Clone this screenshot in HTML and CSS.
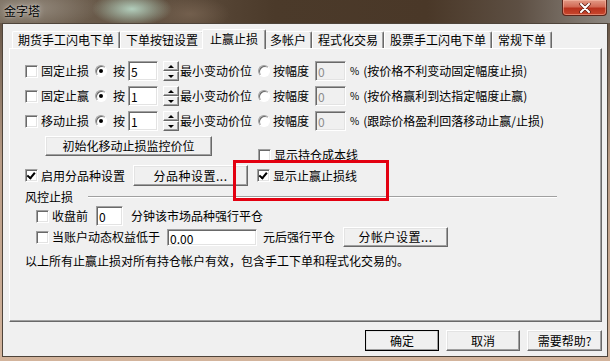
FILE: index.html
```html
<!DOCTYPE html>
<html>
<head>
    <meta charset="utf-8">
    <link rel="stylesheet" href="styles.css">
</head>
<body>
    <div class="window">
        <div class="titlebar">
            <span class="title">金字塔</span>
            <span class="close">
                <svg width="14" height="10" viewBox="0 0 14 10">
                    <path d="M3 1 L11 9 M11 1 L3 9" stroke="#5a1a10" stroke-width="3.4" stroke-linecap="round"/>
                    <path d="M3 1 L11 9 M11 1 L3 9" stroke="#fff" stroke-width="2" stroke-linecap="round"/>
                </svg>
            </span>
        </div>

        <div class="client">
            <div class="tab-strip">
                <div class="tab">期货手工闪电下单</div>
                <div class="tab">下单按钮设置</div>
                <div class="tab active">止赢止损</div>
                <div class="tab">多帐户</div>
                <div class="tab">程式化交易</div>
                <div class="tab">股票手工闪电下单</div>
                <div class="tab">常规下单</div>
            </div>

            <div class="panel">
                <div class="row">
                    <span class="check"></span>
                    <span class="label">固定止损</span>
                    <span class="radio on"></span>
                    <span>按</span>
                    <span class="input num">5</span>
                    <span class="spin"><span class="up"></span><span class="down"></span></span>
                    <span class="unit">最小变动价位</span>
                    <span class="radio second"></span>
                    <span>按幅度</span>
                    <span class="input pct disabled">0</span>
                    <span class="percent">%</span>
                    <span class="hint">(按价格不利变动固定幅度止损)</span>
                </div>
                <div class="row">
                    <span class="check"></span>
                    <span class="label">固定止赢</span>
                    <span class="radio on"></span>
                    <span>按</span>
                    <span class="input num">1</span>
                    <span class="spin"><span class="up"></span><span class="down"></span></span>
                    <span class="unit">最小变动价位</span>
                    <span class="radio second"></span>
                    <span>按幅度</span>
                    <span class="input pct disabled">0</span>
                    <span class="percent">%</span>
                    <span class="hint">(按价格赢利到达指定幅度止赢)</span>
                </div>
                <div class="row">
                    <span class="check"></span>
                    <span class="label">移动止损</span>
                    <span class="radio on"></span>
                    <span>按</span>
                    <span class="input num">1</span>
                    <span class="spin"><span class="up"></span><span class="down"></span></span>
                    <span class="unit">最小变动价位</span>
                    <span class="radio second"></span>
                    <span>按幅度</span>
                    <span class="input pct disabled">0</span>
                    <span class="percent">%</span>
                    <span class="hint">(跟踪价格盈利回落移动止赢/止损)</span>
                </div>

                <div class="row init">
                    <span class="btn init-btn">初始化移动止损监控价位</span>
                    <span class="option cost">
                        <span class="check"></span>
                        <span>显示持仓成本线</span>
                    </span>
                </div>

                <div class="row variety">
                    <span class="check on"></span>
                    <span class="label">启用分品种设置</span>
                    <span class="btn variety-btn">分品种设置...</span>
                    <span class="option lines">
                        <span class="check on"></span>
                        <span>显示止赢止损线</span>
                    </span>
                </div>

                <div class="group">
                    <span>风控止损</span>
                    <span class="rule"></span>
                </div>

                <div class="row risk">
                    <span class="check"></span>
                    <span class="label">收盘前</span>
                    <span class="input minutes">0</span>
                    <span class="after">分钟该市场品种强行平仓</span>
                </div>
                <div class="row risk last">
                    <span class="check"></span>
                    <span class="label">当账户动态权益低于</span>
                    <span class="input equity">0.00</span>
                    <span class="after-eq">元后强行平仓</span>
                    <span class="btn account-btn">分帐户设置...</span>
                </div>

                <p class="note">以上所有止赢止损对所有持仓帐户有效，包含手工下单和程式化交易的。</p>
            </div>

            <div class="actions">
                <span class="btn default">确定</span>
                <span class="btn">取消</span>
                <span class="btn help">需要帮助?</span>
            </div>
        </div>

        <div class="highlight"></div>
    </div>
</body>
</html>
```

FILE: styles.css
```css
* {
    margin: 0;
    padding: 0;
    box-sizing: border-box;
}

body {
    width: 610px;
    height: 361px;
    overflow: hidden;
    font-family: "Noto Sans CJK SC", "Noto Sans", sans-serif;
    font-size: 12px;
    line-height: 14px;
    color: #000;
}

.window {
    position: relative;
    width: 610px;
    height: 361px;
    background: linear-gradient(180deg, #5b4a3a 0, #7d6a5a 60px, #b99c86 160px, #d3b49c 100%);
}

/* title bar */

.titlebar {
    height: 23px;
    display: flex;
    justify-content: space-between;
    align-items: flex-start;
    background:
        radial-gradient(ellipse 40px 17px at 132px 9px, rgba(182, 212, 194, 0.95), rgba(182, 212, 194, 0) 100%),
        radial-gradient(ellipse 70px 22px at 30px 8px, rgba(150, 140, 128, 0.9), rgba(150, 140, 128, 0) 100%),
        radial-gradient(ellipse 40px 18px at 190px 14px, rgba(120, 100, 82, 0.8), rgba(120, 100, 82, 0) 100%),
        linear-gradient(90deg, #756858 0, #5f4e3e 28%, #4b3a2a 45%, #4a3828 70%, #5d4f43 85%, #8d8780 100%);
}

.title {
    padding: 4px 0 0 4px;
    text-shadow: 0 0 6px rgba(255, 255, 255, 0.7), 0 0 2px rgba(255, 255, 255, 0.5);
}

.close {
    width: 45px;
    height: 16px;
    margin-right: 3px;
    display: flex;
    align-items: center;
    justify-content: center;
    border: 1px solid #5c2419;
    border-top: 0;
    border-radius: 0 0 4px 4px;
    background: linear-gradient(180deg, #e29a86 0, #d26a55 45%, #b8321d 55%, #c8472e 100%);
    box-shadow: inset 0 0 0 1px rgba(255, 200, 180, 0.45);
}

/* client area */

.client {
    height: 334px;
    margin: 0 2px;
    border: 1px solid #4e443a;
    background: #f0f0f0;
    padding: 5px 5px 0 6px;
}

.tab-strip {
    display: flex;
    align-items: flex-end;
    height: 19px;
    padding-left: 3px;
    position: relative;
    z-index: 1;
}

.tab {
    height: 17px;
    padding: 0 5px;
    line-height: 16px;
    white-space: nowrap;
    background: #f0f0f0;
    border: 1px solid #fff;
    border-right-color: #696969;
    border-bottom: 0;
    border-radius: 2px 2px 0 0;
    box-shadow: inset -1px 0 #a0a0a0;
}

.tab.active {
    position: relative;
    height: 20px;
    margin: 0 -2px -1px;
    padding: 0 7px;
    line-height: 17px;
    z-index: 2;
}

.panel {
    height: 274px;
    border: 1px solid #fff;
    border-right-color: #696969;
    border-bottom-color: #696969;
    box-shadow: inset -1px -1px #a0a0a0;
    padding: 12px 0 0 15px;
}

/* rows */

.row {
    display: flex;
    align-items: center;
    height: 20px;
    margin-bottom: 5px;
    white-space: nowrap;
}

.label {
    margin-left: 3px;
}

.row > .radio {
    margin: 0 6px;
}

.row > .radio.second {
    margin: 0 3px 0 6px;
}

.input {
    height: 20px;
    padding: 2px 0 0 2px;
    background: #fff;
    border: 1px solid;
    border-color: #a0a0a0 #fff #fff #a0a0a0;
    box-shadow: inset 1px 1px #696969, inset -1px -1px #e3e3e3;
    line-height: 15px;
}

.input.disabled {
    background: #f0f0f0;
    color: #8c8c8c;
}

.num {
    width: 30px;
    margin-left: 3px;
}

.pct {
    width: 31px;
    margin-left: 6px;
}

.percent {
    margin-left: 4px;
    font-size: 10px;
}

.hint {
    margin-left: 4px;
}

.spin {
    width: 16px;
    height: 20px;
    margin-left: 5px;
    display: flex;
    flex-direction: column;
}

.spin span {
    flex: 1;
    display: flex;
    align-items: center;
    justify-content: center;
    background: #f0f0f0;
    border: 1px solid #fff;
    border-right-color: #696969;
    border-bottom-color: #696969;
    box-shadow: inset -1px -1px #a0a0a0;
}

.spin .up::before {
    content: "";
    border-left: 3px solid transparent;
    border-right: 3px solid transparent;
    border-bottom: 3px solid #000;
}

.spin .down::before {
    content: "";
    border-left: 3px solid transparent;
    border-right: 3px solid transparent;
    border-top: 3px solid #000;
}

.unit {
    margin-left: 1px;
}

/* classic controls */

.check {
    flex: none;
    width: 13px;
    height: 13px;
    background: #fff;
    border: 1px solid;
    border-color: #a0a0a0 #fff #fff #a0a0a0;
    box-shadow: inset 1px 1px #696969, inset -1px -1px #e3e3e3;
    position: relative;
}

.check.on::after {
    content: "";
    position: absolute;
    left: 2px;
    top: 1px;
    width: 3px;
    height: 6px;
    border: solid #000;
    border-width: 0 2px 2px 0;
    transform: rotate(40deg);
    transform-origin: 60% 60%;
}

.radio {
    flex: none;
    width: 12px;
    height: 12px;
    border-radius: 50%;
    background: #fff;
    border: 1px solid;
    border-color: #a0a0a0 #fff #fff #a0a0a0;
    box-shadow: inset 1px 1px #696969;
    display: flex;
    align-items: center;
    justify-content: center;
}

.radio.on::after {
    content: "";
    width: 4px;
    height: 4px;
    border-radius: 50%;
    background: #000;
}

.btn {
    display: flex;
    align-items: center;
    justify-content: center;
    height: 20px;
    background: #f0f0f0;
    border: 1px solid #fff;
    border-right-color: #696969;
    border-bottom-color: #696969;
    box-shadow: inset -1px -1px #a0a0a0, inset 1px 1px #e3e3e3;
    white-space: nowrap;
}

.option {
    display: flex;
    align-items: center;
    gap: 3px;
}

/* init row */

.row.init {
    height: 26px;
    align-items: flex-start;
    margin: 1px 0 3px;
}

.init-btn {
    width: 167px;
    margin-left: 20px;
}

.cost {
    margin: 12px 0 0 46px;
}

.row.variety {
    height: 21px;
    margin-bottom: 4px;
}

.variety-btn {
    width: 115px;
    height: 21px;
    margin-left: 8px;
    letter-spacing: 0.5px;
}

.lines {
    margin-left: 9px;
}

/* group separator */

.group {
    display: flex;
    align-items: center;
    height: 14px;
    margin-bottom: 2px;
}

.rule {
    width: 469px;
    margin-left: 15px;
    border-top: 1px solid #a0a0a0;
    border-bottom: 1px solid #fff;
}

/* risk rows */

.row.risk {
    padding-left: 11px;
    margin-bottom: 1px;
}

.minutes {
    width: 27px;
    margin-left: 8px;
}

.after {
    margin-left: 8px;
}

.equity {
    width: 90px;
    height: 17px;
    margin-left: 7px;
    padding-top: 1px;
}

.after-eq {
    margin-left: 6px;
}

.account-btn {
    width: 105px;
    margin-left: 8px;
    letter-spacing: 0.5px;
}

.note {
    margin-top: 6px;
    line-height: 16px;
}

/* dialog buttons */

.actions {
    display: flex;
    justify-content: flex-end;
    gap: 7px;
    margin-top: 8px;
}

.actions .btn {
    width: 74px;
    height: 21px;
}

.actions .btn.help {
    width: 75px;
}

.actions .btn.default {
    outline: 1px solid #000;
    outline-offset: -1px;
    border-color: #fff #404040 #404040 #fff;
}

/* annotation overlay */

.highlight {
    position: absolute;
    left: 233px;
    top: 160px;
    width: 156px;
    height: 41px;
    border: 3px solid #e30010;
}
```
